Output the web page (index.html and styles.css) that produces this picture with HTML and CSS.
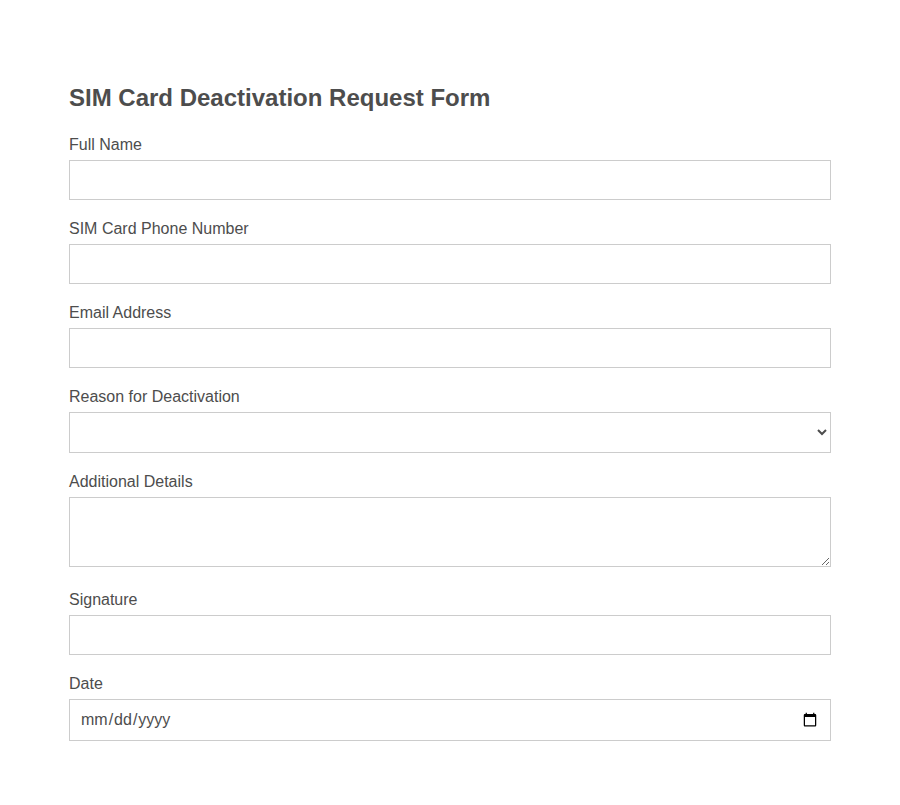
FILE: index.html
```html
<!DOCTYPE html>
<html lang="en">
<head>
<meta charset="utf-8">
<title>SIM Card Deactivation Request Form</title>
<link rel="stylesheet" href="styles.css">
</head>
<body>
<div class="container">
  <h2 class="title">SIM Card Deactivation Request Form</h2>
  <form class="form">
    <div class="group">
      <label class="label" for="name">Full Name</label>
      <input class="field" type="text" id="name">
    </div>
    <div class="group">
      <label class="label" for="phone">SIM Card Phone Number</label>
      <input class="field" type="tel" id="phone">
    </div>
    <div class="group">
      <label class="label" for="email">Email Address</label>
      <input class="field" type="email" id="email">
    </div>
    <div class="group">
      <label class="label" for="reason">Reason for Deactivation</label>
      <select class="field select" id="reason">
        <option></option>
      </select>
    </div>
    <div class="group">
      <label class="label" for="details">Additional Details</label>
      <textarea class="field area" id="details"></textarea>
    </div>
    <div class="group">
      <label class="label" for="sig">Signature</label>
      <input class="field" type="text" id="sig">
    </div>
    <div class="group">
      <label class="label" for="date">Date</label>
      <input class="field date" type="date" id="date">
    </div>
  </form>
</div>
</body>
</html>
```
FILE: styles.css
```css
html, body {
  margin: 0;
  padding: 0;
  background: #ffffff;
}
body {
  font-family: "Liberation Sans", Arial, sans-serif;
  color: #4d4d4d;
}
.container {
  width: 762px;
  margin: 0 0 0 69px;
  padding-top: 84px;
}
.title {
  margin: 0 0 23px 0;
  font-size: 24px;
  line-height: 28px;
  font-weight: bold;
  color: #4d4d4d;
}
.form {
  display: flex;
  flex-direction: column;
  gap: 19px;
}
.group {
  display: flex;
  flex-direction: column;
}
.label {
  display: block;
  font-size: 16px;
  line-height: 18px;
  padding-top: 1px;
  margin-bottom: 6px;
  color: #4d4d4d;
}
.field {
  box-sizing: border-box;
  width: 762px;
  height: 40px;
  margin: 0;
  padding: 10px;
  border: 1px solid #cccccc;
  border-radius: 0;
  font-family: "Liberation Sans", Arial, sans-serif;
  font-size: 16px;
  color: #4d4d4d;
  background: #ffffff;
  outline: none;
}
.select {
  height: 41px;
  padding: 0 6px 0 10px;
}
.area {
  height: 70px;
  resize: vertical;
  margin-bottom: 4px;
}
.date {
  height: 42px;
}
```
